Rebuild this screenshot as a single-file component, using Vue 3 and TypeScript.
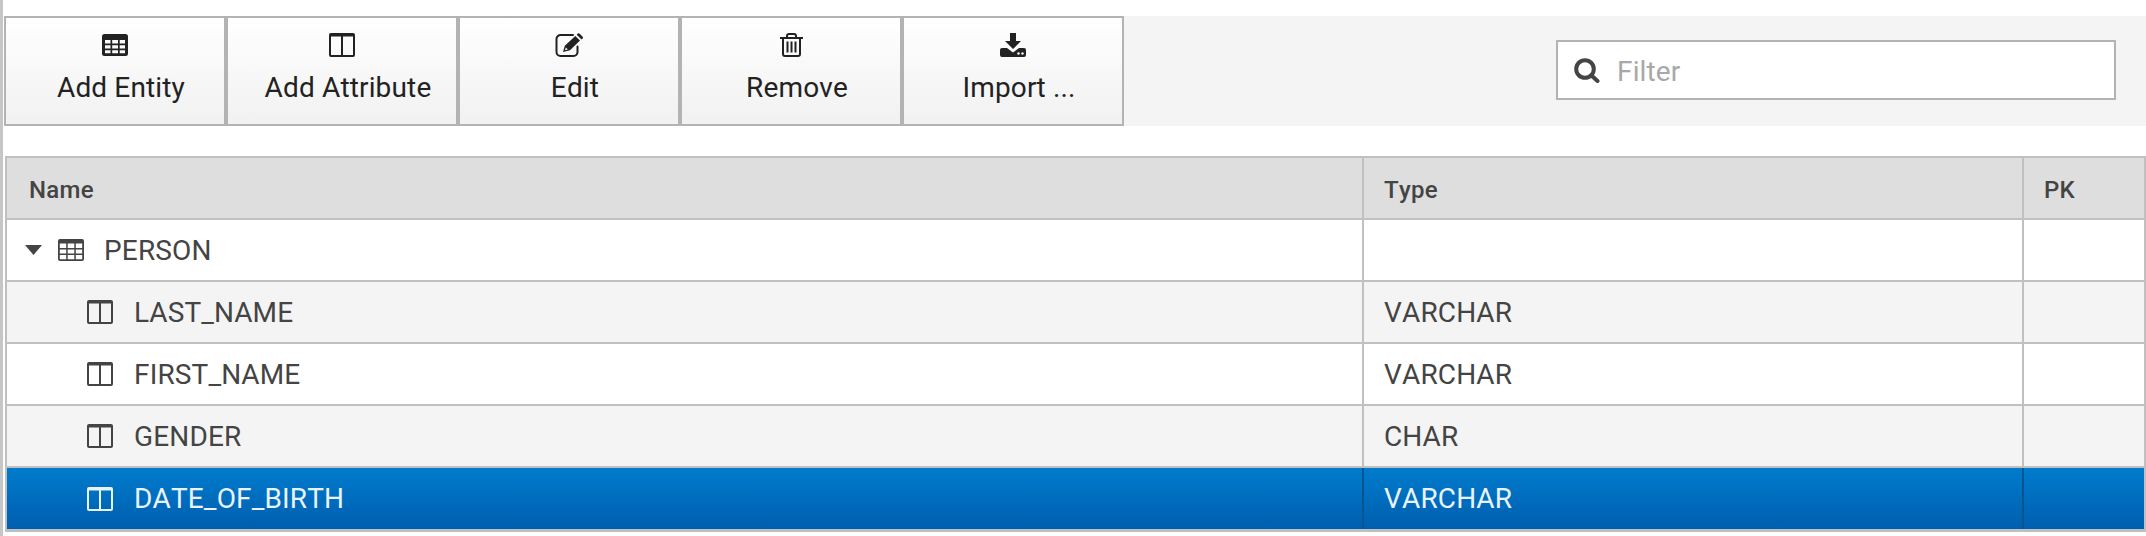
<script setup lang="ts">
// Toolbar actions and the entity tree shown in the grid.
interface Action {
  label: string
  icon: string
  width: number
}

interface Row {
  name: string
  type: string
  icon: 'table' | 'columns'
  selected?: boolean
}

const actions: Action[] = [
  { label: 'Add Entity', icon: 'table', width: 222 },
  { label: 'Add Attribute', icon: 'columns', width: 232 },
  { label: 'Edit', icon: 'edit', width: 222 },
  { label: 'Remove', icon: 'trash', width: 222 },
  { label: 'Import ...', icon: 'import', width: 222 },
]

const rows: Row[] = [
  { name: 'PERSON', type: '', icon: 'table' },
  { name: 'LAST_NAME', type: 'VARCHAR', icon: 'columns' },
  { name: 'FIRST_NAME', type: 'VARCHAR', icon: 'columns' },
  { name: 'GENDER', type: 'CHAR', icon: 'columns' },
  { name: 'DATE_OF_BIRTH', type: 'VARCHAR', icon: 'columns', selected: true },
]

const tablePath =
  'M2.500 0h21A2.500 2.500 0 0 1 26 2.500v17a2.500 2.500 0 0 1-2.500 2.500h-21A2.500 2.500 0 0 1 0 19.500v-17A2.500 2.500 0 0 1 2.500 0z' +
  'M3 6v3.500h5.500V6zM10.200 6v3.500h5.800V6zM17.700 6v3.500H23V6z' +
  'M3 11.200v3.300h5.500v-3.300zM10.200 11.200v3.300h5.800v-3.300zM17.700 11.200v3.300H23v-3.300z' +
  'M3 16.200v3h5.500v-3zM10.200 16.200v3h5.800v-3zM17.700 16.200v3H23v-3z'

const treeTablePath =
  'M2 0h22a2 2 0 0 1 2 2v18a2 2 0 0 1-2 2H2a2 2 0 0 1-2-2V2a2 2 0 0 1 2-2z' +
  'M1.800 4.500v4.500h6.400V4.500zM9.700 4.500v4.500h6.600V4.500zM17.800 4.500v4.500h6.400V4.500z' +
  'M1.800 10.500v4h6.400v-4zM9.700 10.500v4h6.600v-4zM17.800 10.500v4h6.400v-4z' +
  'M1.800 16v4.200h6.400V16zM9.700 16v4.200h6.600V16zM17.800 16v4.200h6.400V16z'

const columnsPath =
  'M2 0h22a2 2 0 0 1 2 2v20a2 2 0 0 1-2 2H2a2 2 0 0 1-2-2V2a2 2 0 0 1 2-2z' +
  'M2 3.500V22h10V3.500zM14 3.500V22h10V3.500z'
</script>

<template>
  <div class="page">
    <div class="toolbar">
      <div class="actions">
        <button
          v-for="action in actions"
          :key="action.label"
          class="action"
          type="button"
          :style="{ width: action.width + 'px' }"
        >
          <span class="action-icon">
            <svg v-if="action.icon === 'table'" width="26" height="22" viewBox="0 0 26 22">
              <path :d="tablePath" fill="currentColor" fill-rule="evenodd" />
            </svg>
            <svg v-else-if="action.icon === 'columns'" width="26" height="24" viewBox="0 0 26 24">
              <path :d="columnsPath" fill="currentColor" fill-rule="evenodd" />
            </svg>
            <svg v-else-if="action.icon === 'edit'" width="29" height="24" viewBox="0 0 29 24">
              <path
                d="M18 2H5.500A4 4 0 0 0 1.500 6v13a4 4 0 0 0 4 4h13a4 4 0 0 0 4-4v-5.500"
                fill="none"
                stroke="currentColor"
                stroke-width="2"
                stroke-linecap="round"
              />
              <path d="M8 19l1.800-6.300L20.300 3l4.700 4.600L15 17.300z" fill="currentColor" />
              <path d="M21.700 1.700l1.200-1.200q.8-.5 1.500 0l3.300 3.200q.5.8 0 1.500l-1.200 1.200z" fill="currentColor" />
              <path d="M10 17.300l.8-2.800 2 1.900z" fill="#fff" />
            </svg>
            <svg v-else-if="action.icon === 'trash'" width="23" height="24" viewBox="0 0 23 24">
              <path
                d="M0 5h23M3 5v16a2 2 0 0 0 2 2h13a2 2 0 0 0 2-2V5M7 5V3q0-2 2-2h5q2 0 2 2v2"
                fill="none"
                stroke="currentColor"
                stroke-width="2"
              />
              <path d="M7.500 8.500v11M11.500 8.500v11M15.500 8.500v11" stroke="currentColor" stroke-width="2" />
            </svg>
            <svg v-else-if="action.icon === 'import'" width="26" height="24" viewBox="0 0 26 24">
              <path d="M10 0h6v8h5l-8 8-8-8h5z" fill="currentColor" />
              <path
                d="M2 15h5l6 4.500 6-4.500h5q2 0 2 2v5q0 2-2 2H2q-2 0-2-2v-5q0-2 2-2z"
                fill="currentColor"
              />
              <circle cx="18.500" cy="20.500" r="1.200" fill="#fff" />
              <circle cx="22.500" cy="20.500" r="1.200" fill="#fff" />
            </svg>
          </span>
          <span class="action-label">{{ action.label }}</span>
        </button>
      </div>
      <label class="filter">
        <svg class="filter-icon" width="26" height="25" viewBox="0 0 26 25">
          <circle cx="11" cy="11" r="8.800" fill="none" stroke="#444" stroke-width="4" />
          <path d="M17.500 17.500l6 5.500" stroke="#444" stroke-width="4" stroke-linecap="round" />
        </svg>
        <input class="filter-input" type="text" placeholder="Filter" />
      </label>
    </div>

    <div class="grid">
      <div class="grid-row head">
        <div class="cell">Name</div>
        <div class="cell">Type</div>
        <div class="cell">PK</div>
      </div>
      <div
        v-for="(row, index) in rows"
        :key="row.name"
        class="grid-row"
        :class="{ odd: index % 2 === 1, selected: row.selected }"
      >
        <div class="cell name" :class="{ child: index > 0 }">
          <svg v-if="index === 0" class="caret" width="17" height="10" viewBox="0 0 17 10">
            <path d="M0 0h17L8.500 10z" fill="currentColor" />
          </svg>
          <svg
            v-if="row.icon === 'table'"
            class="tree-icon"
            width="26"
            height="22"
            viewBox="0 0 26 22"
          >
            <path :d="treeTablePath" fill="currentColor" fill-rule="evenodd" />
          </svg>
          <svg v-else class="tree-icon" width="26" height="24" viewBox="0 0 26 24">
            <path :d="columnsPath" fill="currentColor" fill-rule="evenodd" />
          </svg>
          <span class="name-text">{{ row.name }}</span>
        </div>
        <div class="cell">{{ row.type }}</div>
        <div class="cell"></div>
      </div>
    </div>
  </div>
</template>

<style scoped>
.page {
  box-sizing: border-box;
  min-height: 536px;
  padding-top: 16px;
  border-left: 3px solid #c6c6c6;
  font-family: Roboto, 'Liberation Sans', sans-serif;
  font-size: 28px;
  font-kerning: none;
  letter-spacing: 0.15px;
  color: #444;
}
.toolbar {
  display: flex;
  justify-content: space-between;
  align-items: flex-start;
  height: 110px;
  margin-left: 1px;
  background: #f4f4f4;
}
.actions {
  display: flex;
}
.action {
  box-sizing: border-box;
  display: flex;
  flex-direction: column;
  align-items: center;
  height: 110px;
  padding: 14px 0 0;
  border: 2px solid #b3b3b3;
  border-radius: 0;
  background: linear-gradient(#fff, #f1f1f1);
  color: #222;
  font: inherit;
  letter-spacing: inherit;
}
.action-icon {
  display: flex;
  align-items: center;
  justify-content: center;
  height: 26px;
}
.action-label {
  margin-top: 14px;
  padding-left: 12px;
  line-height: 32px;
}
.filter {
  box-sizing: border-box;
  display: flex;
  align-items: center;
  gap: 17px;
  width: 560px;
  height: 60px;
  margin: 24px 30px 0 0;
  padding-left: 16px;
  border: 2px solid #b3b3b3;
  background: #fff;
}
.filter-icon {
  flex: none;
}
.filter-input {
  flex: 1;
  min-width: 0;
  padding: 2px 0 0;
  border: 0;
  outline: 0;
  background: transparent;
  color: #444;
  font: inherit;
  letter-spacing: inherit;
}
.filter-input::placeholder {
  color: #a8a8a8;
  opacity: 1;
}
.grid {
  margin: 30px 0 0 2px;
  border: 2px solid #c0c0c0;
  border-bottom-width: 3px;
}
.grid-row {
  display: grid;
  grid-template-columns: 1357px 660px 1fr;
  height: 62px;
  border-bottom: 2px solid #c0c0c0;
  box-sizing: border-box;
  background: #fff;
}
.grid-row:last-child {
  height: 61px;
  border-bottom: 0;
}
.cell {
  box-sizing: border-box;
  display: flex;
  align-items: center;
  padding-left: 20px;
  border-right: 2px solid #c0c0c0;
}
.cell:last-child {
  border-right: 0;
}
.head {
  background: #dedede;
  font-size: 24px;
  font-weight: 500;
  letter-spacing: 0.3px;
}
.head .cell {
  padding-top: 4px;
}
.head .cell:first-child {
  padding-left: 22px;
}
.odd {
  background: #f4f4f4;
}
.selected {
  background: linear-gradient(#007bcd, #005eae);
  color: #e9f3fb;
}
.selected .cell {
  border-right-color: #0a5590;
}
.name {
  padding-left: 18px;
}
.name.child {
  padding-left: 80px;
}
.caret {
  flex: none;
  margin-right: 16px;
}
.tree-icon {
  flex: none;
  margin-right: 20px;
}
.child .tree-icon {
  margin-right: 21px;
}
</style>
